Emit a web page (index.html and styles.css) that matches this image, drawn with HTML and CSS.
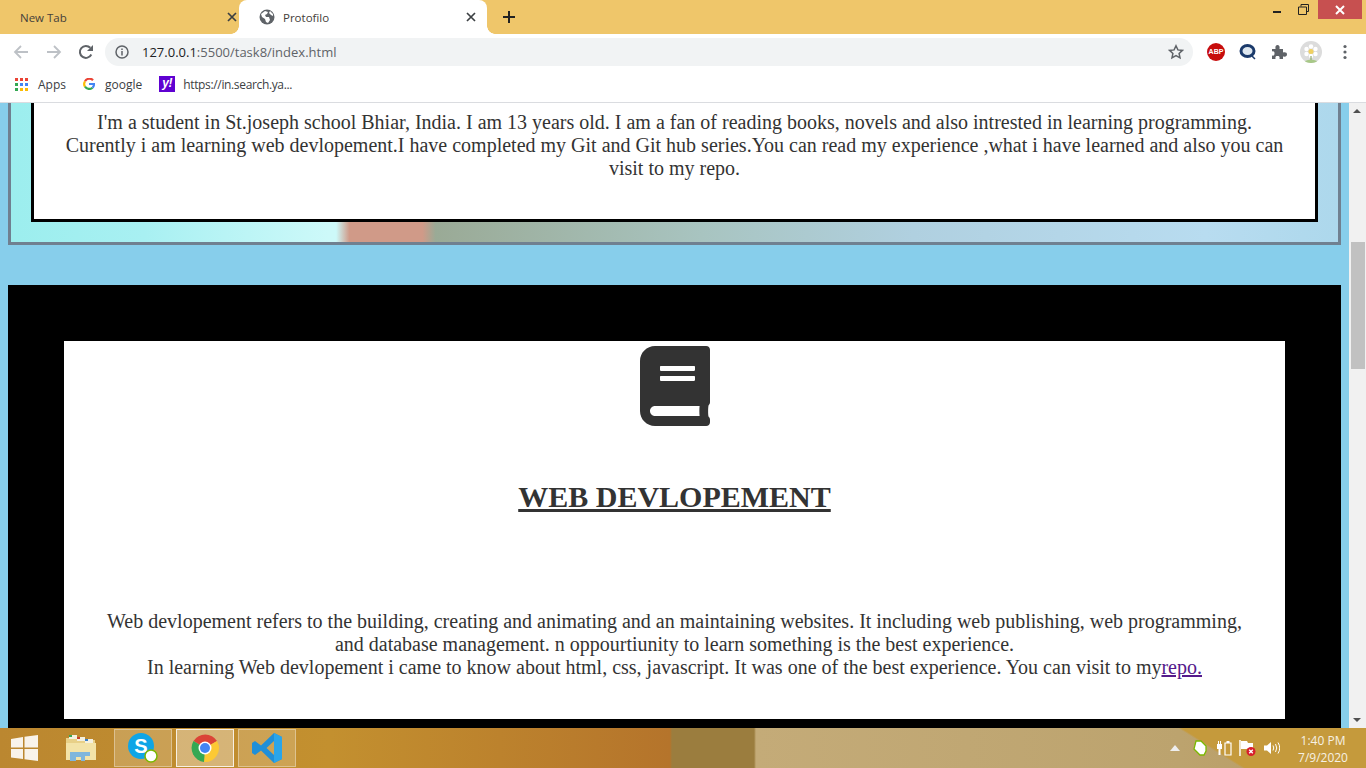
FILE: index.html
```html
<!DOCTYPE html>
<html lang="en">
<head>
    <meta charset="UTF-8">
    <meta name="viewport" content="width=device-width, initial-scale=1.0">
    <title>Protofilo</title>
    <link rel="stylesheet" href="styles.css">
</head>
<body>
    <!-- browser chrome -->
    <div class="tabstrip">
        <div class="tab">
            <span class="tab-title">New Tab</span>
            <svg class="tab-x" width="10" height="10" viewBox="0 0 10 10"><path d="M1 1l8 8M9 1l-8 8"/></svg>
        </div>
        <div class="tab tab-active">
            <svg class="globe" width="16" height="16" viewBox="0 0 16 16"><circle cx="8" cy="8" r="7.5" fill="#5f6368"/><path d="M2 5l4-3 3 1-1 2-2 1 1 2 3 0 1 3-2 3-2-1-1-3-3-2zM11 2l3 3 0 2-2-1-2-2z" fill="#fff"/></svg>
            <span class="tab-title">Protofilo</span>
            <svg class="tab-x" width="10" height="10" viewBox="0 0 10 10"><path d="M1 1l8 8M9 1l-8 8"/></svg>
        </div>
        <svg class="new-tab" width="14" height="14" viewBox="0 0 14 14"><path d="M7 1v12M1 7h12"/></svg>
        <div class="win-controls">
            <span class="win-min"></span>
            <svg class="win-restore" width="11" height="11" viewBox="0 0 11 11"><path d="M3 2.500V.5h7.500V7.500H8.500M.5 3h8v7.500h-8z" fill="none" stroke="#222" stroke-width="1"/></svg>
            <div class="win-close">
                <svg width="10" height="10" viewBox="0 0 10 10"><path d="M1 1l8 8M9 1l-8 8" stroke="#fff" stroke-width="2"/></svg>
            </div>
        </div>
    </div>

    <div class="toolbar">
        <svg class="nav-icon" width="16" height="16" viewBox="0 0 16 16"><path d="M15 8H2M8 2L2 8l6 6" fill="none" stroke="#bdc1c6" stroke-width="1.800"/></svg>
        <svg class="nav-icon" width="16" height="16" viewBox="0 0 16 16"><path d="M1 8h13M8 2l6 6-6 6" fill="none" stroke="#bdc1c6" stroke-width="1.800"/></svg>
        <svg class="nav-icon" width="16" height="16" viewBox="0 0 16 16"><path d="M13.300 10.500A6 6 0 1 1 12.300 3.800" fill="none" stroke="#5f6368" stroke-width="2"/><path d="M15 1v6H9z" fill="#5f6368"/></svg>
        <div class="omnibox">
            <svg width="14" height="14" viewBox="0 0 14 14"><circle cx="7" cy="7" r="6" fill="none" stroke="#5f6368" stroke-width="1.500"/><path d="M7 6v4.500M7 3.500v1.500" stroke="#5f6368" stroke-width="1.500"/></svg>
            <span class="url"><span class="url-host">127.0.0.1</span>:5500/task8/index.html</span>
            <svg class="star" width="16" height="16" viewBox="0 0 16 16"><path d="M8 1.800l1.900 4.100 4.500.5-3.300 3 .9 4.400L8 11.600l-4 2.200.9-4.400-3.300-3 4.500-.5z" fill="none" stroke="#5f6368" stroke-width="1.500"/></svg>
        </div>
        <div class="extensions">
            <div class="abp">ABP</div>
            <svg width="18" height="18" viewBox="0 0 18 18"><ellipse cx="8.500" cy="8" rx="6.500" ry="5.500" fill="#dfe8f0" stroke="#1b3a6b" stroke-width="3"/><path d="M13 13l3 3" stroke="#1b3a6b" stroke-width="1.500"/></svg>
            <svg width="16" height="16" viewBox="0 0 16 16"><path d="M1 5h3.500C4 2 5 1 6.500 1S9 2 8.500 5H12v3.500c3-.5 4 .5 4 2s-1 2.500-4 2V15H8.500c.5-2.500-.5-3-2-3s-2.500.5-2 3H1v-3.500c2 .5 2.500-.5 2.500-2S3 7 1 7.500z" fill="#5f6368"/></svg>
            <div class="avatar">
                <svg width="22" height="22" viewBox="0 0 22 22"><g fill="#fff"><circle cx="11" cy="5.500" r="2.200"/><circle cx="15.500" cy="8" r="2.200"/><circle cx="15.500" cy="13" r="2.200"/><circle cx="11" cy="15" r="2.200"/><circle cx="6.500" cy="13" r="2.200"/><circle cx="6.500" cy="8" r="2.200"/></g><circle cx="11" cy="10.500" r="2.500" fill="#f0d060"/><path d="M11 15v7" stroke="#7a9a50" stroke-width="1"/><path d="M5 20q6-3 12 0v2H5z" fill="#a8c888"/></svg>
            </div>
            <svg class="menu-dots" width="4" height="16" viewBox="0 0 4 16"><g fill="#5f6368"><circle cx="2" cy="2.500" r="1.600"/><circle cx="2" cy="8" r="1.600"/><circle cx="2" cy="13.500" r="1.600"/></g></svg>
        </div>
    </div>

    <div class="bookmarks">
        <div class="bookmark">
            <svg width="13" height="13" viewBox="0 0 13 13">
                <rect width="3" height="3" fill="#ea4335"/><rect x="5" width="3" height="3" fill="#ea4335"/><rect x="10" width="3" height="3" fill="#ea4335"/>
                <rect y="5" width="3" height="3" fill="#34a853"/><rect x="5" y="5" width="3" height="3" fill="#4285f4"/><rect x="10" y="5" width="3" height="3" fill="#4285f4"/>
                <rect y="10" width="3" height="3" fill="#34a853"/><rect x="5" y="10" width="3" height="3" fill="#fbbc05"/><rect x="10" y="10" width="3" height="3" fill="#fbbc05"/>
            </svg>
            <span>Apps</span>
        </div>
        <div class="bookmark">
            <svg width="12" height="12" viewBox="0 0 12 12" fill="none" stroke-width="2.200">
                <path d="M10 2.300A5 5 0 0 0 2 3.300" stroke="#ea4335"/><path d="M2 3.300a5 5 0 0 0 0 5.400" stroke="#fbbc05"/><path d="M2 8.700a5 5 0 0 0 7.500 1" stroke="#34a853"/><path d="M9.500 9.700A5 5 0 0 0 11 6H6" stroke="#4285f4"/>
            </svg>
            <span>google</span>
        </div>
        <div class="bookmark bookmark-long">
            <span class="yahoo">y!</span>
            <span>https://in.search.ya...</span>
        </div>
    </div>

    <div class="viewport">
        <div class="page">
            <section class="about">
                <div class="about-box">
                    <p>I'm a student in St.joseph school Bhiar, India. I am 13 years old. I am a fan of reading books, novels and also intrested in learning programming. Curently i am learning web devlopement.I have completed my Git and Git hub series.You can read my experience ,what i have learned and also you can visit to my repo.</p>
                </div>
            </section>

            <section class="skill">
                <div class="skill-card">
                    <svg class="book" width="70" height="80" viewBox="0 0 448 512"><path d="M448 360V24c0-13.300-10.700-24-24-24H96C43 0 0 43 0 96v320c0 53 43 96 96 96h328c13.300 0 24-10.700 24-24v-16c0-7.500-3.500-14.300-8.900-18.700-4.200-15.400-4.200-59.300 0-74.700 5.400-4.300 8.900-11.100 8.900-18.600zM128 134c0-3.300 2.700-6 6-6h212c3.300 0 6 2.700 6 6v20c0 3.300-2.700 6-6 6H134c-3.300 0-6-2.700-6-6v-20zm0 64c0-3.300 2.700-6 6-6h212c3.300 0 6 2.700 6 6v20c0 3.300-2.700 6-6 6H134c-3.300 0-6-2.700-6-6v-20zm253.400 250H96c-17.700 0-32-14.300-32-32 0-17.600 14.400-32 32-32h285.400c-1.900 17.100-1.900 46.900 0 64z"/></svg>
                    <h1>WEB DEVLOPEMENT</h1>
                    <p>Web devlopement refers to the building, creating and animating and an maintaining websites. It including web publishing, web programming, and database management. n oppourtiunity to learn something is the best experience.<br>In learning Web devlopement i came to know about html, css, javascript. It was one of the best experience. You can visit to my<a href="#">repo.</a></p>
                </div>
            </section>
        </div>

        <div class="scrollbar">
            <div class="scroll-up"></div>
            <div class="scroll-thumb"></div>
            <div class="scroll-down"></div>
        </div>
    </div>

    <!-- windows taskbar -->
    <div class="taskbar">
        <svg class="start" width="28" height="26" viewBox="0 0 28 26"><path d="M0 4l12-2v10.500H0zM13.500 1.700L27 0v12.500H13.500zM0 14h12v10L0 22.500zM13.500 14H27v12l-13.500-1.800z" fill="#fff" opacity=".9"/></svg>
        <svg class="explorer" width="32" height="32" viewBox="0 0 32 32">
            <path d="M1 6h13l2 2h14v20H1z" fill="#e8d088"/>
            <rect x="4" y="3" width="8" height="4" fill="#f4f0e0"/><rect x="4" y="3" width="3" height="2" fill="#3aa655"/>
            <rect x="12" y="5" width="8" height="4" fill="#f4f0e0"/><rect x="12" y="5" width="3" height="2" fill="#c8402a"/>
            <rect x="20" y="7" width="8" height="4" fill="#f4f0e0"/><rect x="20" y="7" width="3" height="2" fill="#3a80c8"/>
            <path d="M1 11h30v17H1z" fill="#f3e3a8"/>
            <path d="M5 20h20v4h-5v5h-4v-4H11v4H5z" fill="#7fb6dc"/>
        </svg>
        <div class="task-btn">
            <svg width="32" height="32" viewBox="0 0 32 32"><circle cx="14" cy="14" r="13" fill="#0fa5e6"/><text x="14" y="21" class="skype-s">S</text><circle cx="24" cy="24" r="6" fill="#fff" stroke="#7ab800" stroke-width="1.500"/></svg>
        </div>
        <div class="task-btn task-btn-active">
            <svg width="30" height="30" viewBox="0 0 30 30">
                <path d="M15 15L3.500 8A14 14 0 0 1 27 8z" fill="#db4437"/>
                <path d="M15 15L27 8A14 14 0 0 1 14 29z" fill="#fcc934"/>
                <path d="M15 15L14 29A14 14 0 0 1 3.500 8z" fill="#34a853"/>
                <circle cx="15" cy="15" r="6.500" fill="#fff"/><circle cx="15" cy="15" r="5" fill="#4285f4"/>
            </svg>
        </div>
        <div class="task-btn">
            <svg width="32" height="32" viewBox="0 0 32 32">
                <path d="M23 1l8 4v22l-8 4-13-12.500L4 23l-3-2v-10l3-2 6 4.500zM23 9l-7.500 7 7.500 7z" fill="#1f8fd8"/>
                <path d="M23 1l8 4v22l-8 4z" fill="#2aa5ea"/>
            </svg>
        </div>

        <div class="tray">
            <svg width="10" height="6" viewBox="0 0 10 6"><path d="M5 0l5 6H0z" fill="#eee"/></svg>
            <svg class="tray-lime" width="14" height="16" viewBox="0 0 14 16"><path d="M3 1h5l5 5v5l-2 4H7L1 9z" fill="#fff" stroke="#7ab800" stroke-width="1.300"/></svg>
            <svg width="16" height="16" viewBox="0 0 16 16"><path d="M1 4h1v-3h1v3h1v-3h1v3h1v5H4.500v6h-2V9H1z" fill="#fff"/><path d="M9 3h6v12H9z" fill="none" stroke="#fff" stroke-width="1.200"/><rect x="10.500" y="1" width="3" height="2" fill="#fff"/></svg>
            <svg width="18" height="18" viewBox="0 0 18 18"><path d="M1 1v16" stroke="#fff" stroke-width="1.500"/><path d="M2 2h6l1 2h5v6H2z" fill="#fff"/><circle cx="12" cy="12.500" r="4.500" fill="#d81e2c"/><path d="M10.200 10.700l3.600 3.600M13.800 10.700l-3.600 3.600" stroke="#fff" stroke-width="1.300"/></svg>
            <svg width="16" height="14" viewBox="0 0 16 14"><path d="M0 4.500h3L7 1v12L3 9.500H0z" fill="#fff"/><path d="M9 4.500q1.500 2.500 0 5M11.500 3q2.500 4 0 8M14 1.500q3.500 5.500 0 11" fill="none" stroke="#fff" stroke-width="1"/></svg>
            <div class="clock">
                <span>1:40 PM</span>
                <span>7/9/2020</span>
            </div>
        </div>
    </div>
</body>
</html>
```

FILE: styles.css
```css
* {
    box-sizing: border-box;
}

html, body {
    height: 100%;
}

body {
    margin: 0;
    display: flex;
    flex-direction: column;
    height: 768px;
    overflow: hidden;
    font-family: "Open Sans", "Noto Sans", sans-serif;
    background-color: #fff;
}

/* tabs */
.tabstrip {
    display: flex;
    align-items: stretch;
    height: 34px;
    flex: none;
    background-color: #efc66a;
}

.tab {
    display: flex;
    align-items: center;
    width: 239px;
    padding: 0 2px 0 20px;
}

.tab-title {
    flex: 1;
    font-size: 11.500px;
    color: #45403a;
}

.tab-x {
    stroke: #3c4043;
    stroke-width: 1.700;
}

.tab-active {
    position: relative;
    width: 248px;
    padding: 0 11px 0 20px;
    background-color: #fff;
    border-radius: 8px 8px 0 0;
}

/* the small flares at the foot of the open tab */
.tab-active::before,
.tab-active::after {
    content: "";
    position: absolute;
    bottom: 0;
    width: 8px;
    height: 8px;
}

.tab-active::before {
    left: -8px;
    background: radial-gradient(circle at 0 0, #efc66a 7.500px, #fff 8px);
}

.tab-active::after {
    right: -8px;
    background: radial-gradient(circle at 100% 0, #efc66a 7.500px, #fff 8px);
}

.globe {
    margin-right: 8px;
}

.new-tab {
    align-self: center;
    margin-left: 15px;
    stroke: #222;
    stroke-width: 2;
}

.win-controls {
    display: flex;
    align-items: flex-start;
    margin-left: auto;
    padding-right: 4px;
}

.win-min {
    width: 8px;
    height: 2px;
    margin: 11px 17px 0 0;
    background-color: #222;
}

.win-restore {
    margin: 4px 9px 0 0;
}

.win-close {
    display: flex;
    align-items: center;
    justify-content: center;
    width: 44px;
    height: 19px;
    background-color: #c75050;
}

/* address bar */
.toolbar {
    display: flex;
    align-items: center;
    height: 33px;
    flex: none;
    padding: 3px 0 0 13px;
    background-color: #fff;
}

.nav-icon {
    margin-right: 16px;
}

.nav-icon:nth-child(1) {
    margin-right: 17px;
}

.nav-icon:nth-child(3) {
    margin-right: 11px;
}

.omnibox {
    display: flex;
    align-items: center;
    gap: 13px;
    width: 1088px;
    height: 28px;
    padding: 0 9px 0 10px;
    border-radius: 14px;
    background-color: #f1f3f4;
}

.url {
    flex: 1;
    font-size: 13px;
    color: #5f6368;
}

.url-host {
    color: #202124;
}

.extensions {
    display: flex;
    align-items: center;
    gap: 14px;
    margin-left: 14px;
}

.abp {
    width: 18px;
    height: 18px;
    border-radius: 50%;
    font: bold 7px/18px "Liberation Sans", sans-serif;
    text-align: center;
    color: #fff;
    background-color: #c70d0d;
}

.avatar {
    width: 22px;
    height: 22px;
    margin-left: -1px;
    overflow: hidden;
    border-radius: 50%;
    background-color: #dcdcdc;
}

.menu-dots {
    margin-left: 7px;
}

.bookmarks {
    display: flex;
    align-items: center;
    gap: 17px;
    height: 36px;
    flex: none;
    padding: 0 0 1px 15px;
    border-bottom: 1px solid #dadce0;
    background-color: #fff;
}

.bookmark {
    display: flex;
    align-items: center;
    gap: 10px;
    font-size: 12px;
    color: #3c4043;
}

.bookmark-long {
    gap: 8px;
    letter-spacing: -0.350px;
}

.yahoo {
    width: 16px;
    height: 16px;
    font: italic bold 12px/15px "Liberation Sans", sans-serif;
    text-align: center;
    color: #fff;
    background-color: #5f01d1;
}

/* page */
.viewport {
    display: flex;
    flex: 1;
    min-height: 0;
}

.page {
    flex: 1;
    padding: 0 8px;
    overflow: hidden;
    font-family: "Liberation Serif", serif;
    font-size: 20px;
    line-height: 23px;
    text-align: center;
    color: #333;
    background-color: #87ceeb;
}

.about {
    height: 142px;
    padding: 0 20px;
    border: 3px solid #708090;
    border-top: none;
    background: linear-gradient(90deg, #9ceeee 0, #a8f0f2 10%, #cdf9f9 24%, #cdf9f9 24.500%, #d09a88 25.500%, #d09a88 31%, #9aaa96 32%, #a8c4c0 52%, #b0d0e0 68%, #b8dcf0 90%, #add8ec 100%);
}

.about-box {
    height: 119px;
    padding: 8px 30px 0;
    border: 3px solid #000;
    border-top: none;
    background-color: #fff;
}

.about-box p {
    margin: 0;
}

.skill {
    margin-top: 40px;
    border: 56px solid #000;
    background-color: #fff;
}

.skill-card {
    height: 378px;
    padding: 5px 40px 0;
    background-color: #fff;
}

.book {
    display: block;
    margin: 0 auto;
    fill: #333;
}

.skill-card h1 {
    margin: 54px 0 96px;
    font-size: 30px;
    line-height: 34px;
    font-weight: bold;
    text-decoration: underline;
}

.skill-card p {
    margin: 0;
}

.skill-card a {
    color: #551a8b;
}

.scrollbar {
    display: flex;
    flex-direction: column;
    width: 17px;
    flex: none;
    background-color: #f1f1f1;
}

.scroll-up,
.scroll-down {
    height: 17px;
    position: relative;
}

.scroll-up::after,
.scroll-down::after {
    content: "";
    position: absolute;
    left: 4px;
    border-left: 4px solid transparent;
    border-right: 4px solid transparent;
}

.scroll-up::after {
    top: 6px;
    border-bottom: 4px solid #505050;
}

.scroll-down::after {
    top: 7px;
    border-top: 4px solid #505050;
}

.scroll-thumb {
    width: 14px;
    height: 127px;
    margin: 122px 0 0 2px;
    background-color: #c1c1c1;
}

.scroll-down {
    margin-top: auto;
}

/* taskbar */
.taskbar {
    display: flex;
    align-items: center;
    height: 40px;
    flex: none;
    padding-left: 11px;
    background:
        linear-gradient(32deg, transparent 658px, #c59a3c 660px),
        linear-gradient(90deg, #bb8730 0, #c3902f 330px, #b5742b 670px, #9b7d3e 672px, #9b7d3e 754px, #c4ab78 756px, #bca36e 1180px, #b89a60 100%);
}

.start {
    margin-right: 26px;
}

.explorer {
    margin-right: 17px;
}

.task-btn {
    display: flex;
    align-items: center;
    justify-content: center;
    width: 58px;
    height: 38px;
    margin-right: 4px;
    border: 1px solid rgba(255, 255, 255, 0.35);
    background-color: rgba(255, 255, 255, 0.18);
}

.task-btn-active {
    border-color: rgba(255, 255, 255, 0.8);
    background-color: rgba(255, 255, 255, 0.35);
}

.skype-s {
    font: bold 20px "Liberation Sans", sans-serif;
    text-anchor: middle;
    fill: #fff;
}

.tray {
    display: flex;
    align-items: center;
    gap: 7px;
    margin-left: auto;
    padding-right: 13px;
}

.tray-lime {
    margin: 0 2px 0 6px;
}

.clock {
    display: flex;
    flex-direction: column;
    align-items: center;
    gap: 2px;
    width: 60px;
    margin: 2px 0 0 6px;
    font-size: 12px;
    line-height: 15px;
    color: #f6f1e4;
}
```
